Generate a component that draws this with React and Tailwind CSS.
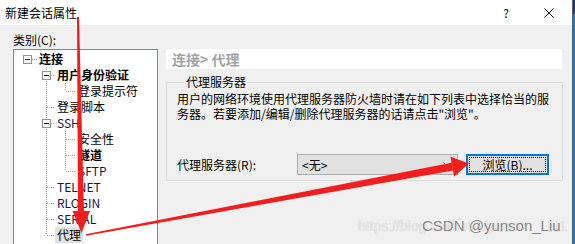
import React from 'react';

// tree rows of the session dialog
const rows = [
    { t: '连接', lvl: 0, bold: true, exp: true },
    { t: '用户身份验证', lvl: 1, bold: true, exp: true },
    { t: '登录提示符', lvl: 2, last: true },
    { t: '登录脚本', lvl: 1 },
    { t: 'SSH', lvl: 1, exp: true, latin: true },
    { t: '安全性', lvl: 2 },
    { t: '隧道', lvl: 2, bold: true },
    { t: 'SFTP', lvl: 2, last: true, latin: true },
    { t: 'TELNET', lvl: 1, latin: true },
    { t: 'RLOGIN', lvl: 1, latin: true },
    { t: 'SERIAL', lvl: 1, latin: true },
    { t: '代理', lvl: 1, sel: true },
];

const svgWidth = [23, 41, 62];

const Dots = ({ x1, y1, x2, y2 }) => (
    <line x1={x1} y1={y1} x2={x2} y2={y2} stroke="#a0a0a0" strokeWidth="1" strokeDasharray="1 1" shapeRendering="crispEdges" />
);

const Expander = ({ x }) => (
    <g shapeRendering="crispEdges">
        <rect x={x + 0.5} y={4.5} width={8} height={8} fill="#ffffff" stroke="#919191" />
        <line x1={x + 2} y1={8.5} x2={x + 7} y2={8.5} stroke="#1a1a1a" />
    </g>
);

const TreeRow = ({ row, i }) => {
    const w = svgWidth[row.lvl];
    return (
        <div className="flex items-center h-[16px]">
            <svg width={w} height="16" className="shrink-0">
                {i >= 1 && <Dots x1={32.5} y1={0} x2={32.5} y2={i === rows.length - 1 ? 8 : 16} />}
                {row.lvl === 2 && <Dots x1={51.5} y1={0} x2={51.5} y2={row.last ? 8 : 16} />}
                {row.lvl === 0 && <Dots x1={18} y1={8.5} x2={23} y2={8.5} />}
                {row.lvl === 1 && <Dots x1={row.exp ? 37 : 33} y1={8.5} x2={41} y2={8.5} />}
                {row.lvl === 2 && <Dots x1={52} y1={8.5} x2={62} y2={8.5} />}
                {row.lvl === 0 && <Expander x={9} />}
                {row.lvl === 1 && row.exp && <Expander x={28} />}
            </svg>
            <span
                className={`px-[2px] h-[16px] leading-[16px] whitespace-nowrap ${row.bold ? 'font-bold' : ''} ${row.sel ? 'bg-[#e1e1e1]' : ''} ${row.latin ? 'text-[#14144a]' : 'text-black'}`}
            >
                {row.t}
            </span>
        </div>
    );
};

const App = () => {
    return (
        <div className="relative w-[575px] h-[244px] overflow-hidden flex font-['Noto_Sans_CJK_SC',sans-serif] text-[12px] text-black">
            {/* dialog window */}
            <div className="w-[572px] h-full flex flex-col bg-[#f0f0f0]">
                {/* title bar */}
                <div className="h-[25px] shrink-0 bg-white flex items-center pl-[5px]">
                    <span className="leading-[16px]">新建会话属性</span>
                    <span className="ml-auto w-[16px] text-center">?</span>
                    <svg width="10" height="10" className="ml-[30px] mr-[18px]">
                        <path d="M0.5 0.5 L9.5 9.5 M9.5 0.5 L0.5 9.5" stroke="#111" strokeWidth="1" />
                    </svg>
                </div>

                {/* body */}
                <div className="flex-1 min-h-0 overflow-hidden flex items-start pt-[8px]">
                    <div className="pl-[13px] w-[158px] shrink-0">
                        <div className="h-[14px] leading-[14px]">类别(C):</div>
                        <div className="mt-[2px] h-[200px] bg-white border border-[#828790] pt-[1px]">
                            {rows.map((r, i) => (
                                <TreeRow key={i} row={r} i={i} />
                            ))}
                        </div>
                    </div>

                    <div className="ml-[8px] pt-[16px] w-[396px] shrink-0">
                        <div className="h-[20px] bg-white flex items-center pl-[6px] text-[14px] font-bold text-[#a3a3a3]">
                            连接&gt; 代理
                        </div>
                        <fieldset className="mt-[5px] border border-[#dcdcdc] pl-[10px] pr-[13px] pt-[1px] pb-[5px]">
                            <legend className="ml-[7px] px-[2px] leading-[16px]">代理服务器</legend>
                            <div className="h-[30px] leading-[15px] whitespace-nowrap">
                                用户的网络环境使用代理服务器防火墙时请在如下列表中选择恰当的服
                                <br />
                                务器。若要添加/编辑/删除代理服务器的话请点击"浏览"。
                            </div>
                            <div className="mt-[33px] flex items-center h-[21px]">
                                <div className="w-[120px]">代理服务器(R):</div>
                                <div className="w-[161px] h-[21px] bg-[#e1e1e1] border border-[#adadad] flex items-center pl-[4px] pr-[5px]">
                                    <span>&lt;无&gt;</span>
                                    <svg width="9" height="5" className="ml-auto">
                                        <path d="M0.5 0.5 L4.5 4.5 L8.5 0.5" stroke="#333" strokeWidth="1" fill="none" />
                                    </svg>
                                </div>
                                <div className="ml-[8px] w-[83px] h-[21px] border-2 border-[#0078d7] bg-[#e1e1e1] p-[1px]">
                                    <div className="w-full h-full border border-dotted border-black flex items-center justify-center">
                                        浏览(B)...
                                    </div>
                                </div>
                            </div>
                        </fieldset>
                    </div>
                </div>
            </div>

            {/* screen edge behind the dialog */}
            <div className="w-[1px] h-full bg-[#5f5f5f]" />
            <div className="flex-1 flex flex-col">
                <div className="h-[14px] bg-[#1c3c70]" />
                <div className="flex-1 bg-[#1a78d2]" />
            </div>

            {/* watermark */}
            <div className="absolute left-[358px] top-[216px] font-['Liberation_Sans',sans-serif] text-[14px] leading-[20px] text-[#e6e6e6] [text-shadow:0_0_1px_#c8c8c8] whitespace-nowrap">
                https://blog.csdn.net/yunson_Liu1
            </div>
            <div className="absolute left-[422px] top-[216px] font-['Liberation_Sans',sans-serif] text-[15px] leading-[20px] text-[#858585] [text-shadow:0_0_2px_#ffffff] whitespace-nowrap">
                CSDN @yunson_Liu
            </div>

            {/* red annotation arrows */}
            <svg className="absolute inset-0 pointer-events-none" width="575" height="244">
                <polygon points="77,17 79,17 84,212 78,212" fill="#f21d1d" />
                <polygon points="72.5,211 90,211 81.5,233" fill="#f21d1d" />
                <polygon points="86.15,235.8 85.85,234.2 451.6,162.7 453,170.5" fill="#f21d1d" />
                <polygon points="450.5,156.8 469,163.5 454.1,176.4" fill="#f21d1d" />
            </svg>
        </div>
    );
};

export default App;
